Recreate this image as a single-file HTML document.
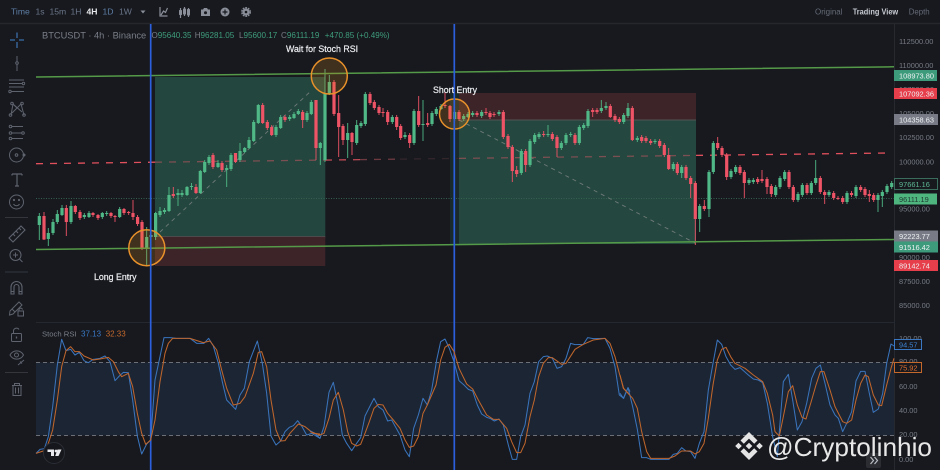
<!DOCTYPE html>
<html><head><meta charset="utf-8"><style>
html,body{margin:0;padding:0;background:#17191f;width:940px;height:470px;overflow:hidden}
svg{display:block;font-family:"Liberation Sans",sans-serif;filter:blur(.35px)}
</style></head><body>
<svg width="940" height="470" viewBox="0 0 940 470" xmlns="http://www.w3.org/2000/svg">
<rect width="940" height="470" fill="#17191f"/>
<!-- frame -->
<path d="M0 23.5H940" stroke="#25272d" stroke-width="1.5"/>
<path d="M36 322.5H894" stroke="#25282e"/>
<path d="M894.5 24V470" stroke="#26292f"/>
<!-- top bar -->
<g font-size="8.6" fill="#6b7688">
<text x="11" y="14.5" fill="#5f7fa5">Time</text>
<text x="35.500" y="14.5">1s</text><text x="49.500" y="14.5">15m</text><text x="70.500" y="14.5">1H</text>
<text x="86.500" y="14.5" fill="#e6e8ec" font-weight="bold">4H</text><text x="102.500" y="14.5" fill="#5f7fa5">1D</text><text x="119" y="14.5">1W</text>
<text x="815" y="14.5" fill="#666b76" textLength="27.500" lengthAdjust="spacingAndGlyphs">Original</text>
<text x="852.700" y="14.5" fill="#c9ccd3" font-weight="bold" textLength="45.500" lengthAdjust="spacingAndGlyphs">Trading View</text>
<text x="908.700" y="14.500" fill="#666b76" textLength="21" lengthAdjust="spacingAndGlyphs">Depth</text>
</g>
<path d="M140.500 10.500h5l-2.500 3z" fill="#8a8e98"/>
<g fill="none" stroke="#8a8e98" stroke-width="1.2">
<path d="M160 7v9h7.500M161 15l2.500-4 2 1.500 2-4.500"/>
<path d="M180.500 8v10M184.500 7v9M188.500 8v9"/>
</g>
<g fill="#8a8e98">
<rect x="179" y="10" width="3" height="5" rx=".6"/><rect x="183" y="8.500" width="3" height="6" rx=".6"/><rect x="187" y="9" width="3" height="6.500" rx=".6"/>
<path d="M201 9.500h2l1-1.500h3l1 1.500h2v6.500h-9z"/>
<circle cx="225" cy="12" r="4.500"/><circle cx="246" cy="12" r="3.500"/>
</g>
<circle cx="205.500" cy="12.700" r="1.500" fill="#17191f"/>
<path d="M222.500 12h5M225 9.500v5" stroke="#17191f" stroke-width="1.200"/>
<circle cx="246" cy="12" r="4.200" fill="none" stroke="#8a8e98" stroke-width="1.500" stroke-dasharray="1.800 .9"/>
<circle cx="246" cy="12" r="1.300" fill="#17191f"/>
<!-- zones -->
<rect x="155" y="77" width="170.300" height="159" fill="#24473f" fill-opacity=".98"/>
<rect x="155" y="236" width="170.300" height="2" fill="#4c4a4a"/>
<rect x="155" y="237" width="170.300" height="29" fill="#3d2429"/>
<rect x="450" y="93" width="9" height="151" fill="#1a2a2a"/>
<rect x="459" y="93" width="237" height="27" fill="#3d2429"/>
<rect x="459" y="120" width="237" height="124" fill="#24473f"/>
<rect x="459" y="119.500" width="237" height="1" fill="#555"/>
<!-- dotted price, diag, dashed -->
<path d="M36 198.500H894" stroke="#35604f" stroke-width="1" stroke-dasharray="1 1.500"/>
<path d="M160 232L312 90" stroke="#6f7b78" stroke-width=".9" stroke-dasharray="4 4"/>
<path d="M459 120L695 243" stroke="#6f7b78" stroke-width=".9" stroke-dasharray="4 4"/>
<g fill="none" stroke-width="1.300" stroke-dasharray="7 7">
<path d="M36 163.700L155 162.200" stroke="#e1505c"/>
<path d="M155 162.200L325 160.070" stroke="#7c4f52"/>
<path d="M325 160.070L360 159.630" stroke="#c04a55"/>
<path d="M360 159.630L400 159.130" stroke="#6e3a40"/>
<path d="M400 159.130L459 158.400" stroke="#33262b"/>
<path d="M459 158.400L696 155.400" stroke="#7c4f52"/>
<path d="M696 155.400L888 153" stroke="#e1505c"/>
</g>
<!-- stoch band -->
<rect x="36" y="362.500" width="858" height="73" fill="#1c2533"/>
<path d="M36 362.500H894M36 435.500H894" stroke="#6c6f76" stroke-width=".9" stroke-dasharray="4 3"/>
<!-- wicks -->
<path stroke="#4fb886" stroke-width=".9" fill="none" d="M39.300 213V240M48.300 228V246M53 219V235M57.300 210V224M62 205V216M71 201V224M84.300 213V219M89 211V218M102.300 212V219M106.700 211V216M119.700 207V218M146.700 227V265M151 232V245M155.600 212V240M160 207V217M164.500 208V214M169 187V212M178 189V206M182 190V197M187 186V196M191.500 183V190M200.300 170V194M204.700 160V173M209 155V165M218 160V168M226.700 165V187M231 153V171M240 143V162M244.700 147V153M249 137V149M253.700 120V142M258.300 104V124M276 125V137M280.700 115V129M289.700 115V121M294 112V119M298.300 109V115M307 111V122M311.300 100V115M320.300 142V165M325 69V162M329.300 75V95M347.700 123V158M356.700 120V145M361 121V128M365.300 92V126M392.300 115V124M405 132V139M414 109V145M423 100V141M432 111V126M436.300 107V116M441 104V110M454.700 110V121M463.700 114V121M468 112V118M472.700 111V117M481.700 110V118M499 110V116M521.300 149V175M530 139V167M534.700 133V144M539 132V139M548 125V137M561.300 141V150M566 133V145M570.700 132V137M579.300 125V145M583.700 123V130M588 109V128M601.300 100V113M606 102V110M623.700 113V124M628 103V118M637.300 136V142M655 139V144M673.300 162V171M681.700 165V178M699.700 204V232M709 170V217M713.300 141V174M731 169V179M735.700 165V174M749 178V185M753.300 178V184M775.700 185V197M780 176V189M784.700 170V181M798 192V202M802.300 183V197M811.300 181V195M815.700 160V185M829 190V197M847 191V204M856 185V198M878 193V212M882.300 190V207M887 184V194M891.700 181V189"/>
<path stroke="#ef5366" stroke-width=".9" fill="none" d="M44 212V240M66.300 205V236M75.300 205V214M80 210V220M93 212V217M98 214V220M111 212V218M115 215V222M124 208V215M128.700 211V215M133 200V220M137.600 215V226M142 220V250M173.300 187V198M196 184V194M213 153V169M222 161V172M235.500 153V163M262.700 103V124M267.300 120V130M271.700 125V136M285 115V122M302.700 110V128M316 100V160M334 80V116M338.700 95V157M343 124V145M352 132V155M370 92V105M374.300 100V110M379 105V115M383 108V117M387.700 110V125M396.700 115V130M400.700 124V140M409.700 133V148M418.700 96V127M427.700 113V127M445 92V108M450 105V122M459 110V121M477 111V117M486 108V115M490 111V119M494 112V117M503.300 110V139M508 134V149M512.300 145V182M516.700 166V177M525.700 149V172M543.700 131V137M552.300 132V141M557 135V157M575 133V145M592.700 108V117M597 108V114M610.300 104V118M615 114V122M619.300 117V124M632.300 106V141M641.700 135V143M646 136V143M650.700 139V145M659.700 139V148M664.300 143V157M668.700 148V170M677.300 162V175M686 165V180M690.700 176V198M695.300 181V245M704.300 200V211M717.700 137V150M722 146V157M726.700 153V180M740 165V175M744.300 170V198M757.700 177V184M762 170V183M767 177V194M771.300 184V197M789 170V189M793.300 185V202M807 183V195M820.300 176V194M824.700 190V204M833.700 191V200M838 196V200M842.700 196V204M851.500 191V197M860.700 185V192M865 187V197M869.300 190V202M873.700 193V202"/>
<!-- bodies -->
<path stroke="#4fb886" stroke-width="3.200" fill="none" d="M39.300 216V225M48.300 233V239M53 222V233M57.300 214V222M62 208V215M71 206V222M84.300 215V217M89 213V217M102.300 213V217M106.700 213V214M119.700 209V217M146.700 237V249M151 235V237M155.600 213V237M160 211V215M164.500 210V212M169 195V211M178 193V195M182 193V195M187 187V195M191.500 186V187M200.300 171V193M204.700 162V172M209 157V163M218 163V167M226.700 168V170M231 155V169M240 151V160M244.700 148V152M249 140V148M253.700 122V141M258.300 105V123M276 127V135M280.700 117V128M289.700 117V119M294 114V118M298.300 111V114M307 113V120M311.300 102V114M320.300 143V148M325 93V160M329.300 82V94M347.700 133V140M356.700 125V143M361 123V126M365.300 94V124M392.300 117V122M405 135V137M414 111V143M423 124V125M432 113V124M436.300 109V114M441 106V109M454.700 112V119M463.700 116V119M468 114V117M472.700 113V115M481.700 112V116M499 112V114M521.300 151V173M530 141V165M534.700 135V142M539 134V137M548 134V135M561.300 143V148M566 135V143M570.700 134V135M579.300 127V143M583.700 125V128M588 111V126M601.300 108V111M606 106V108M623.700 115V122M628 108V116M637.300 138V140M655 141V142M673.300 164V169M681.700 167V173M699.700 206V219M709 172V209M713.300 143V172M731 171V177M735.700 167V172M749 180V183M753.300 180V182M775.700 187V195M780 178V187M784.700 172V179M798 194V200M802.300 185V195M811.300 183V193M815.700 178V183M829 192V195M847 193V202M856 187V196M878 195V200M882.300 192V196M887 186V192M891.700 183V187"/>
<path stroke="#ef5366" stroke-width="3.200" fill="none" d="M44 216V239.500M66.300 208V222M75.300 206V212M80 212V218M93 213V215M98 215V218M111 213V216M115 216V217M124 209V213M128.700 212V213M133 213V217M137.600 217V224M142 222V249M173.300 194V196M196 187V193M213 155V167M222 163V170M235.500 153V162M262.700 105V123M267.300 122V128M271.700 127V135M285 117V120M302.700 112V120M316 100V148M334 82V114M338.700 113V127M343 126V140M352 133V142M370 94V103M374.300 102V108M379 107V113M383 112V113M387.700 112V122M396.700 117V127M400.700 126V138M409.700 135V143M418.700 111V125M427.700 123V125M445 105V106M450 106V119M459 112V119M477 113V115M486 112V113M490 113V117M494 114V115M503.300 112V137M508 136V147M512.300 147V171M516.700 170V174M525.700 151V165M543.700 134V135M552.300 134V139M557 137V148M575 135V143M592.700 110V112M597 110V112M610.300 106V117M615 116V120M619.300 119V122M632.300 108V140M641.700 137V141M646 138V141M650.700 141V143M659.700 141V146M664.300 145V155M668.700 155V169M677.300 164V173M686 167V178M690.700 178V184M695.300 183V219M704.300 206V209M717.700 143V148M722 148V155M726.700 155V177M740 167V173M744.300 172V183M757.700 179V182M762 179V181M767 179V187M771.300 186V194M789 172V187M793.300 187V200M807 185V193M820.300 178V192M824.700 192V195M833.700 193V198M838 198V199M842.700 198V202M851.500 193V195M860.700 187V190M865 189V195M869.300 194V196M873.700 195V200"/>
<!-- channel lines -->
<path d="M36 77L894 66.800M36 249.500L894 239.500" stroke="#559a48" stroke-width="1.500" fill="none"/>
<!-- circles -->
<g stroke="#e8912a" stroke-width="1.500" fill="#e68c1e" fill-opacity=".2">
<circle cx="146.800" cy="247.700" r="18"/><circle cx="329.300" cy="76" r="18"/><circle cx="454.500" cy="114" r="15"/>
</g>
<!-- vertical blue -->
<path d="M150.700 24V470M454.300 24V470" stroke="#2b5fdc" stroke-width="1.700"/>
<!-- stoch lines, coordinates in 3x crop space -->
<g fill="none" stroke-width="3.100" stroke-linejoin="round">
<g transform="translate(0,310) scale(.33333)">
<polyline stroke="#3a74bc" points="108,430 120,418 133,416 145,380 158,290 172,165 185,88 198,122 212,118 225,135 238,127 252,152 265,158 280,148 300,145 315,138 330,155 345,212 358,198 370,187 385,188 398,270 412,378 425,432 440,402 452,390 465,210 480,140 492,83 510,83 530,85 570,85 590,100 612,100 626,85 640,108 655,160 668,220 680,270 707,298 720,255 733,235 748,155 772,93 787,160 800,250 813,378 828,405 842,393 855,365 868,352 880,347 893,332 905,348 920,375 935,370 960,385"/>
<polyline stroke="#c0662c" points="108,430 133,422 145,400 158,360 172,270 185,170 198,122 212,110 225,125 238,125 252,138 280,150 300,147 325,142 340,155 355,185 365,200 385,190 398,230 412,310 425,370 437,403 452,390 465,330 480,215 495,130 505,100 518,85 570,85 610,98 630,93 650,120 665,180 680,235 700,285 720,280 735,260 760,190 775,127 785,125 800,170 813,270 828,360 842,393 855,392 870,370 895,342 915,350 940,370 960,372"/>
</g>
<g transform="translate(310,310) scale(.33333)">
<polyline stroke="#3a74bc" points="0,362 15,370 30,385 42,350 57,247 70,217 85,290 97,375 110,400 125,422 140,400 152,383 165,318 178,292 192,265 205,290 219,300 233,333 245,330 270,375 285,420 298,440 311,355 325,315 339,265 352,285 365,240 380,150 392,95 405,87 418,115 432,155 447,212 462,225 475,238 488,243 502,285 515,312 530,322 540,325 553,333 567,327 580,345 595,405 607,448 620,448 632,380 645,345 660,250 673,215 686,155 700,140 712,138 727,145 741,175 755,170 768,145 782,100 795,104 820,103 833,83 850,86 885,85 900,115 915,170 928,255 941,265 954,233 960,245"/>
<polyline stroke="#c0662c" points="0,365 30,375 42,370 57,325 70,270 85,247 100,300 113,365 125,400 140,408 152,403 165,370 178,335 192,295 205,283 219,285 233,310 250,330 270,355 285,390 298,412 311,408 325,380 339,310 352,285 378,225 392,150 405,112 418,103 432,125 447,175 470,222 488,237 505,270 530,315 550,328 567,328 590,355 605,395 620,428 632,428 645,400 660,320 673,270 686,200 700,160 715,143 727,143 755,163 768,160 795,118 820,103 850,90 885,85 900,100 915,140 928,190 941,235 960,255"/>
</g>
<g transform="translate(620,310) scale(.33333)">
<polyline stroke="#3a74bc" points="0,250 10,265 24,233 38,290 52,358 65,443 80,443 92,448 147,448 160,433 172,430 185,413 198,423 212,425 225,445 238,400 252,365 265,240 279,160 292,90 305,103 318,140 332,165 345,178 360,173 385,195 400,207 415,210 428,218 442,280 458,380 472,440 490,215 505,193 518,270 532,360 546,335 560,280 575,205 588,175 601,165 615,220 630,285 645,315 655,325 668,365 680,340 695,305 708,213 722,184 735,184 748,250 760,307 775,297 788,250 800,160 813,102 822,108"/>
<polyline stroke="#c0662c" points="0,195 10,235 24,250 38,265 52,295 65,365 80,425 92,445 147,445 165,438 185,423 212,423 225,432 238,425 252,400 265,325 279,225 292,150 305,118 318,112 332,140 345,160 375,175 400,195 428,215 442,250 458,315 465,365 478,378 490,320 505,245 518,227 532,285 546,322 558,327 575,270 588,225 601,185 612,185 630,240 645,290 668,335 680,340 695,330 708,270 722,220 735,195 745,200 760,255 775,285 785,287 800,225 813,175 822,145"/>
</g>
</g>
<!-- legends -->
<text x="42" y="38.500" font-size="9.300" fill="#7b7e87">BTCUSDT · 4h · Binance</text>
<g font-size="8.100" fill="#3f9d7b">
<text x="151.500" y="38.200"><tspan fill="#7b7e87">O</tspan>95640.35</text>
<text x="194.700" y="38.200"><tspan fill="#7b7e87">H</tspan>96281.05</text>
<text x="239" y="38.200"><tspan fill="#7b7e87">L</tspan>95600.17</text>
<text x="281" y="38.200"><tspan fill="#7b7e87">C</tspan>96111.19</text>
<text x="324.800" y="38.200">+470.85 (+0.49%)</text>
</g>
<text x="42" y="336.500" font-size="7.700" fill="#7b7e87">Stoch RSI</text>
<text x="81" y="336.500" font-size="8" fill="#3a78c4">37.13</text>
<text x="105.700" y="336.500" font-size="8" fill="#c4682c">32.33</text>
<!-- annotations -->
<g font-size="8.800" fill="#eceef0" stroke="#eceef0" stroke-width=".2">
<text x="286" y="52">Wait for Stoch RSI</text>
<text x="94" y="280">Long Entry</text>
<text x="433" y="93">Short Entry</text>
</g>
<!-- axis labels -->
<g font-size="7.400" fill="#787b84">
<text x="899" y="44">112500.00</text><text x="899" y="68">110000.00</text><text x="899" y="92">107500.00</text><text x="899" y="116">105000.00</text><text x="899" y="140">102500.00</text><text x="899" y="164.500">100000.00</text><text x="899" y="188">97500.00</text><text x="899" y="211.500">95000.00</text><text x="899" y="260">90000.00</text><text x="899" y="284">87500.00</text><text x="899" y="308">85000.00</text>
<text x="899" y="341">100.00</text><text x="899" y="364">80.00</text><text x="899" y="389">60.00</text><text x="899" y="413">40.00</text><text x="899" y="437">20.00</text><text x="899" y="462">0.00</text>
</g>
<!-- tags -->
<rect x="894" y="70" width="43" height="11" fill="#3d9b7c"/>
<rect x="894" y="88" width="43" height="11" fill="#e63e4a"/>
<rect x="894" y="114" width="44" height="11" fill="#787b86"/>
<rect x="894.500" y="178.500" width="43" height="11" fill="#17191f" stroke="#3b6d5c"/>
<rect x="894" y="193.500" width="43" height="11" fill="#4fb57f"/>
<rect x="894" y="230.500" width="44" height="11" fill="#787b86"/>
<rect x="894" y="241.500" width="44" height="11" fill="#3d9b7c"/>
<rect x="894" y="260" width="44" height="11" fill="#e63e4a"/>
<g font-size="7.400" fill="#eef0f2">
<text x="899" y="78.500">108973.80</text><text x="899" y="96.500">107092.36</text><text x="899" y="122.500">104358.63</text>
<text x="899" y="187" fill="#5fb894">97661.16</text>
<text x="899" y="202" fill="#1f3a32">96111.19</text>
<text x="899" y="239">92223.77</text><text x="899" y="250">91516.42</text><text x="899" y="268.500">89142.74</text>
</g>
<rect x="894.500" y="339.500" width="27" height="10" fill="#17191f" stroke="#3a78c4"/>
<text x="899" y="347.500" font-size="7.400" fill="#3c80d0">94.57</text>
<rect x="894.500" y="362.500" width="27" height="10" fill="#17191f" stroke="#c4682c"/>
<text x="899" y="370.500" font-size="7.400" fill="#e07030">75.92</text>
<!-- left tools -->
<g fill="none" stroke="#5f636d" stroke-width="1">
<g stroke="#3a6ea8" stroke-width="1.300"><path d="M10 40h5M19 40h5M17 32.500v5.500M17 42v6"/></g>
<path d="M17 56v15"/><circle cx="17" cy="63" r="1.300" fill="#17191f"/>
<path d="M9 80h15M9 83.500h13M9 87h15M11.500 91.500H24"/><circle cx="23.500" cy="83.500" r="1.200"/><circle cx="10" cy="91.500" r="1.200"/>
<path d="M11 115L13 104 17 108 21 104 24 115M13 104L22 112M21 104L12 113"/><circle cx="12" cy="103.500" r="1.300"/><circle cx="22" cy="103.500" r="1.300"/><circle cx="10.500" cy="115" r="1.300"/><circle cx="24" cy="115" r="1.300"/>
<path d="M12 126.500H23M12 133H22M12 138.500H23"/><circle cx="10.500" cy="126.500" r="1.300"/><circle cx="10.500" cy="133" r="1.300"/><circle cx="23" cy="133" r="1.300"/><circle cx="10.500" cy="138.500" r="1.300"/>
<circle cx="16.500" cy="155" r="7"/><circle cx="16.500" cy="155" r="1.300"/><circle cx="24" cy="155" r="1" fill="#5f636d"/>
<path d="M12 174H22M17 174V186M15 186h4M12 174v1.500M22 174v1.500" stroke-width="1.200"/>
<circle cx="16.500" cy="202" r="7"/><path d="M13.500 204c1.500 2.300 4.500 2.300 6 0" /><circle cx="14" cy="200" r=".6" fill="#5f636d"/><circle cx="19" cy="200" r=".6" fill="#5f636d"/>
<path d="M5 217.500H28M5 272H28M5 372.500H28" stroke="#33363d"/>
<path d="M9 238L21 226 25 230 13 242ZM13 234l2 2M16 231l2 2M19 228l2 2" stroke-width="1.100"/>
<circle cx="15.500" cy="255" r="5.500"/><path d="M19.500 259l3 3M13 255h5M15.500 252.500v5"/>
<path d="M11 294v-7a5.500 5.500 0 0 1 11 0v7h-3v-7a2.500 2.500 0 0 0-5 0v7zM11 291.500h3M19 291.500h3" stroke-width="1.100"/>
<path d="M10 311L19 302 22 305 13 314 9.500 315ZM12 309l3 3"/><rect x="18" y="311" width="5.500" height="5"/><path d="M19 311v-1.500a1.800 1.800 0 0 1 3.500 0"/>
<rect x="11.500" y="333.500" width="10" height="8" rx="1"/><path d="M13.500 333.500v-2.500a3 3 0 0 1 5.500-1.500"/><path d="M16.500 336.500v2" stroke-width="1.300"/>
<path d="M10 355c3-5.500 10.500-5.500 13.500 0-3 5.500-10.500 5.500-13.500 0z"/><circle cx="16.500" cy="355" r="2"/><path d="M18 365l6-5M20 361.500l2 2"/>
<path d="M12 385.500h10M14.500 385.500v-2h5v2M13 385.500v10h8v-10M15.500 387.500v6M18.500 387.500v6"/>
</g>
<!-- TV logo -->
<circle cx="54" cy="453" r="10.500" fill="#15171c" stroke="#2b2e35"/>
<path d="M47.500 449.500h6.500v6.500h-3v-4h-3.500z" fill="#e8eaed"/><circle cx="56" cy="451" r="1.400" fill="#e8eaed"/><path d="M57.500 449.500h4l-3 6.500h-3.300z" fill="#e8eaed"/>
<!-- collapse -->
<rect x="866" y="453" width="15" height="15" rx="2" fill="#2b2d33"/>
<path d="M870.500 457l3 3.500-3 3.500M874.500 457l3 3.500-3 3.500" fill="none" stroke="#b9bcc3" stroke-width="1.200"/>
<!-- watermark -->
<path fill="#e4e4e4" d="M749 432l8.500 8.500-3.300 3.300-5.200-5.200-5.200 5.200-3.300-3.300zM749 460l-8.500-8.500 3.300-3.300 5.200 5.200 5.200-5.200 3.300 3.300zM738.500 442.700l3.300 3.300-3.300 3.300-3.300-3.300zM759.500 442.700l3.300 3.300-3.300 3.300-3.300-3.300zM749 442.700l3.300 3.300-3.300 3.300-3.300-3.300z"/>
<text x="767" y="456" font-size="26" fill="#e8e8e8" textLength="165" lengthAdjust="spacingAndGlyphs">@Cryptolinhio</text>
</svg>
</body></html>
